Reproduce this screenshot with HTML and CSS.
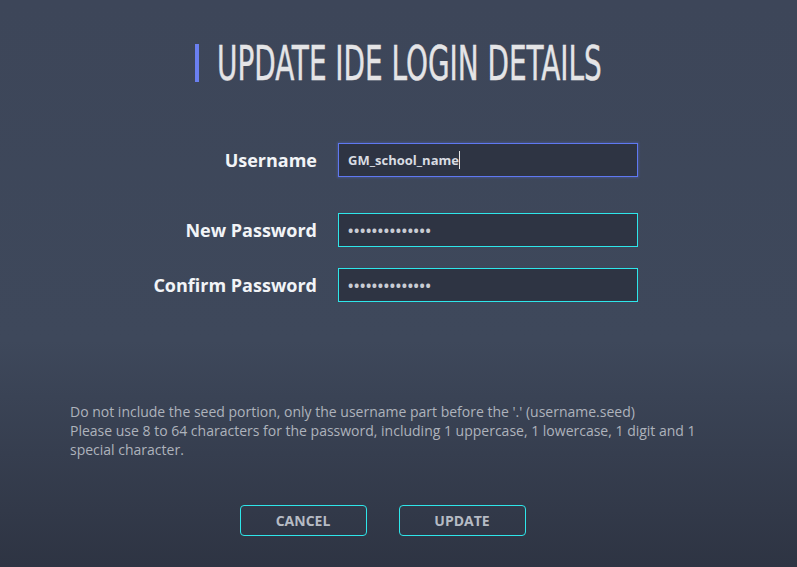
FILE: index.html
```html
<!DOCTYPE html>
<html lang="en">
<head>
<meta charset="utf-8">
<title>Update IDE Login Details</title>
<link rel="stylesheet" href="styles.css">
</head>
<body>
<main class="page">
  <header class="heading">
    <span class="heading-bar"></span>
    <h1 class="heading-text">UPDATE IDE LOGIN DETAILS</h1>
  </header>

  <form class="form">
    <div class="row row-user">
      <label class="label" for="u">Username</label>
      <div class="field field-focus"><span class="value">GM_school_name</span><span class="caret"></span></div>
    </div>
    <div class="row row-pass">
      <label class="label" for="p1">New Password</label>
      <div class="field field-cyan"><span class="dots">••••••••••••••</span></div>
    </div>
    <div class="row row-confirm">
      <label class="label" for="p2">Confirm Password</label>
      <div class="field field-cyan"><span class="dots">••••••••••••••</span></div>
    </div>
  </form>

  <p class="help">Do not include the seed portion, only the username part before the '.' (username.seed)<br>Please use 8 to 64 characters for the password, including 1 uppercase, 1 lowercase, 1 digit and 1 special character.</p>

  <div class="actions">
    <button class="btn" type="button">CANCEL</button>
    <button class="btn" type="button">UPDATE</button>
  </div>
</main>
</body>
</html>
```

FILE: styles.css
```css
html, body {
  margin: 0;
  padding: 0;
  height: 100%;
}
body {
  background: linear-gradient(180deg, #3d4659 0%, #3e485b 60%, #2e3443 100%);
  font-family: "Open Sans", "DejaVu Sans", sans-serif;
  color: #e8eaee;
  overflow: hidden;
}
.page {
  width: 797px;
  height: 567px;
  display: flex;
  flex-direction: column;
}
.heading {
  display: flex;
  align-items: center;
  justify-content: flex-start;
  margin-top: 44px;
  padding-left: 195px;
  height: 38px;
}
.heading-bar {
  flex: none;
  width: 4px;
  height: 38px;
  background: #6a7ff0;
  margin-right: 18px;
}
.heading-text {
  margin: 0;
  font-family: "DejaVu Sans Condensed", "DejaVu Sans", sans-serif;
  font-stretch: condensed;
  font-weight: 400;
  font-size: 48px;
  line-height: 38px;
  color: #e4e4e6;
  white-space: nowrap;
  transform: scaleX(0.646);
  transform-origin: left center;
  -webkit-text-stroke: 0.4px #e4e4e6;
}
.form {
  margin-top: 61px;
  display: flex;
  flex-direction: column;
}
.row {
  display: flex;
  align-items: center;
}
.row-pass { margin-top: 36px; }
.row-confirm { margin-top: 21px; }
.label {
  width: 317px;
  text-align: right;
  font-weight: 700;
  font-size: 18px;
  color: #f2f4f7;
  margin-right: 21px;
}
.field {
  width: 289px;
  height: 32px;
  background: #2e3443;
  display: flex;
  align-items: center;
  padding-left: 9px;
  box-sizing: content-box;
}
.field-focus {
  border: 1px solid #5f78f2;
  box-shadow: 0 0 2px 1px rgba(95, 120, 242, 0.25);
}
.field-cyan {
  border: 1px solid #2ee6ea;
}
.value {
  font-weight: 700;
  font-size: 13px;
  color: #d9dce2;
}
.caret {
  width: 1px;
  height: 18px;
  background: #e6e6e6;
}
.dots {
  font-size: 14px;
  letter-spacing: 0.7px;
  color: #c9ccd3;
  font-weight: 700;
}
.help {
  margin: 100px 0 0 70px;
  width: 650px;
  font-size: 14px;
  line-height: 19px;
  color: #aeb3bc;
}
.actions {
  margin-top: 46px;
  display: flex;
  justify-content: center;
  gap: 32px;
  padding-right: 32px;
}
.btn {
  width: 127px;
  height: 31px;
  border: 1px solid #2ee6ea;
  border-radius: 4px;
  background: transparent;
  color: #b6bbc4;
  font-family: "Open Sans", "DejaVu Sans", sans-serif;
  font-weight: 700;
  font-size: 14px;
  padding: 0;
}
```
